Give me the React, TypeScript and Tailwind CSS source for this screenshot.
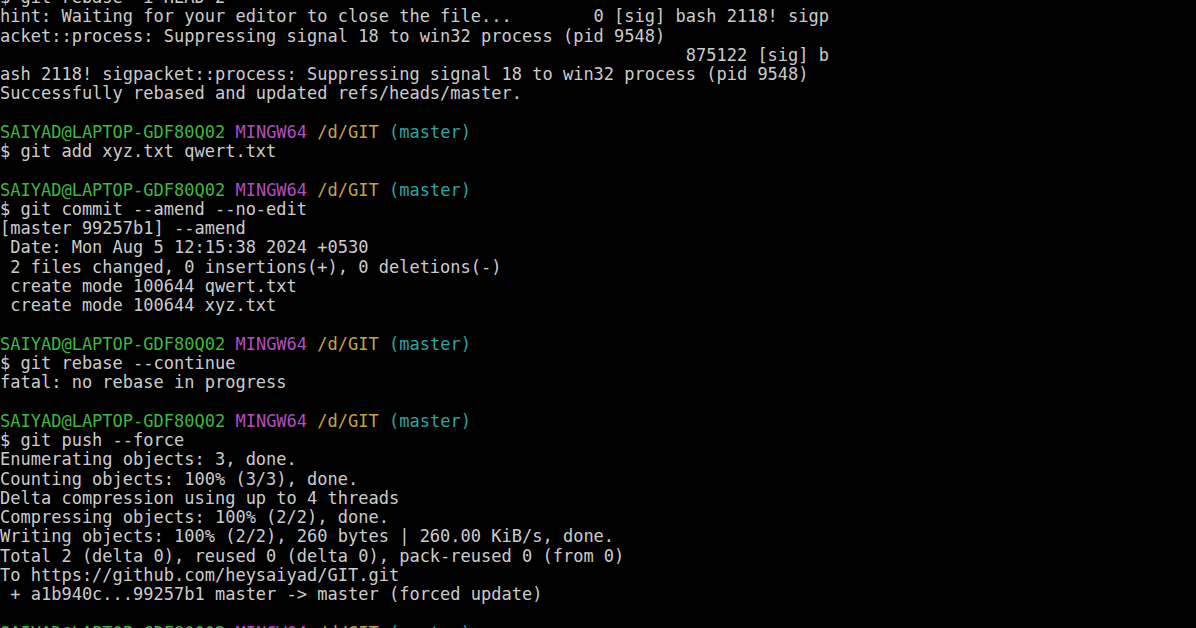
import React from 'react';

type Line = string | 'PROMPT';

const lines: Line[] = [
  '$ git rebase -i HEAD~2',
  'hint: Waiting for your editor to close the file...        0 [sig] bash 2118! sigp',
  'acket::process: Suppressing signal 18 to win32 process (pid 9548)',
  ' '.repeat(67) + '875122 [sig] b',
  'ash 2118! sigpacket::process: Suppressing signal 18 to win32 process (pid 9548)',
  'Successfully rebased and updated refs/heads/master.',
  '',
  'PROMPT',
  '$ git add xyz.txt qwert.txt',
  '',
  'PROMPT',
  '$ git commit --amend --no-edit',
  '[master 99257b1] --amend',
  ' Date: Mon Aug 5 12:15:38 2024 +0530',
  ' 2 files changed, 0 insertions(+), 0 deletions(-)',
  ' create mode 100644 qwert.txt',
  ' create mode 100644 xyz.txt',
  '',
  'PROMPT',
  '$ git rebase --continue',
  'fatal: no rebase in progress',
  '',
  'PROMPT',
  '$ git push --force',
  'Enumerating objects: 3, done.',
  'Counting objects: 100% (3/3), done.',
  'Delta compression using up to 4 threads',
  'Compressing objects: 100% (2/2), done.',
  'Writing objects: 100% (2/2), 260 bytes | 260.00 KiB/s, done.',
  'Total 2 (delta 0), reused 0 (delta 0), pack-reused 0 (from 0)',
  'To https://github.com/heysaiyad/GIT.git',
  ' + a1b940c...99257b1 master -> master (forced update)',
  '',
  'PROMPT',
];

const Prompt: React.FC = () => (
  <div className="h-[19.27px] whitespace-pre">
    <span className="text-[#3fb83f]">SAIYAD@LAPTOP-GDF80Q02</span>{' '}
    <span className="text-[#b44cc4]">MINGW64</span>{' '}
    <span className="text-[#c4a443]">/d/GIT</span>{' '}
    <span className="text-[#2ba5a5]">(master)</span>
  </div>
);

const App: React.FC = () => {
  return (
    <main className="h-[628px] w-[1196px] overflow-hidden bg-black">
      <div className="-mt-[12px] font-['DejaVu_Sans_Mono',monospace] text-[17px] leading-[19.27px] text-[#cccccc]">
        {lines.map((line, i) =>
          line === 'PROMPT' ? (
            <Prompt key={i} />
          ) : (
            <div key={i} className="h-[19.27px] whitespace-pre">
              {line}
            </div>
          )
        )}
      </div>
    </main>
  );
};

export default App;
